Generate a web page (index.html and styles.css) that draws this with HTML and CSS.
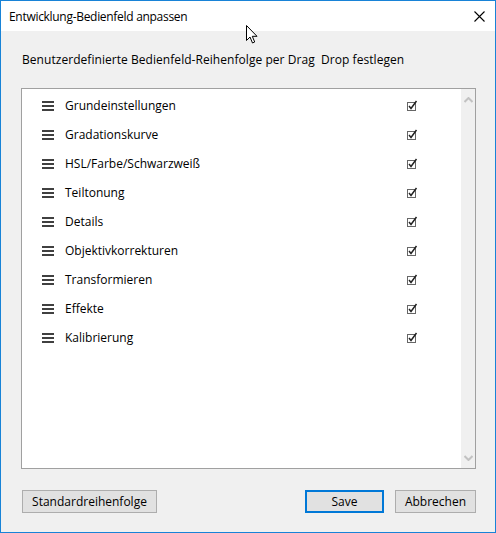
FILE: index.html
```html
<!DOCTYPE html>
<html lang="de">
<head>
<meta charset="utf-8">
<title>Entwicklung-Bedienfeld anpassen</title>
<link rel="stylesheet" href="styles.css">
</head>
<body>
<div class="window">
  <div class="titlebar">
    <span class="title">Entwicklung-Bedienfeld anpassen</span>
    <svg class="close" width="11" height="11" viewBox="0 0 11 11"><path d="M0.5 0.5 L10.5 10.5 M10.5 0.5 L0.5 10.5" stroke="#000" stroke-width="1.1" fill="none"/></svg>
  </div>
  <div class="content">
    <p class="subtitle">Benutzerdefinierte Bedienfeld-Reihenfolge per Drag&nbsp; Drop festlegen</p>
    <div class="listbox">
      <ul class="items">
        <li class="item"><span class="grip"></span><span class="label">Grundeinstellungen</span><svg class="check" width="11" height="12" viewBox="0 0 11 12"><rect x="0.5" y="2.5" width="8" height="8" fill="#fff" stroke="#666"/><path d="M2 6 L4 8.5 L9.5 1" stroke="#222" stroke-width="1.5" fill="none"/></svg></li>
        <li class="item"><span class="grip"></span><span class="label">Gradationskurve</span><svg class="check" width="11" height="12" viewBox="0 0 11 12"><rect x="0.5" y="2.5" width="8" height="8" fill="#fff" stroke="#666"/><path d="M2 6 L4 8.5 L9.5 1" stroke="#222" stroke-width="1.5" fill="none"/></svg></li>
        <li class="item"><span class="grip"></span><span class="label">HSL/Farbe/Schwarzweiß</span><svg class="check" width="11" height="12" viewBox="0 0 11 12"><rect x="0.5" y="2.5" width="8" height="8" fill="#fff" stroke="#666"/><path d="M2 6 L4 8.5 L9.5 1" stroke="#222" stroke-width="1.5" fill="none"/></svg></li>
        <li class="item"><span class="grip"></span><span class="label">Teiltonung</span><svg class="check" width="11" height="12" viewBox="0 0 11 12"><rect x="0.5" y="2.5" width="8" height="8" fill="#fff" stroke="#666"/><path d="M2 6 L4 8.5 L9.5 1" stroke="#222" stroke-width="1.5" fill="none"/></svg></li>
        <li class="item"><span class="grip"></span><span class="label">Details</span><svg class="check" width="11" height="12" viewBox="0 0 11 12"><rect x="0.5" y="2.5" width="8" height="8" fill="#fff" stroke="#666"/><path d="M2 6 L4 8.5 L9.5 1" stroke="#222" stroke-width="1.5" fill="none"/></svg></li>
        <li class="item"><span class="grip"></span><span class="label">Objektivkorrekturen</span><svg class="check" width="11" height="12" viewBox="0 0 11 12"><rect x="0.5" y="2.5" width="8" height="8" fill="#fff" stroke="#666"/><path d="M2 6 L4 8.5 L9.5 1" stroke="#222" stroke-width="1.5" fill="none"/></svg></li>
        <li class="item"><span class="grip"></span><span class="label">Transformieren</span><svg class="check" width="11" height="12" viewBox="0 0 11 12"><rect x="0.5" y="2.5" width="8" height="8" fill="#fff" stroke="#666"/><path d="M2 6 L4 8.5 L9.5 1" stroke="#222" stroke-width="1.5" fill="none"/></svg></li>
        <li class="item"><span class="grip"></span><span class="label">Effekte</span><svg class="check" width="11" height="12" viewBox="0 0 11 12"><rect x="0.5" y="2.5" width="8" height="8" fill="#fff" stroke="#666"/><path d="M2 6 L4 8.5 L9.5 1" stroke="#222" stroke-width="1.5" fill="none"/></svg></li>
        <li class="item"><span class="grip"></span><span class="label">Kalibrierung</span><svg class="check" width="11" height="12" viewBox="0 0 11 12"><rect x="0.5" y="2.5" width="8" height="8" fill="#fff" stroke="#666"/><path d="M2 6 L4 8.5 L9.5 1" stroke="#222" stroke-width="1.5" fill="none"/></svg></li>
      </ul>
      <div class="scrollbar">
        <svg width="9" height="6" viewBox="0 0 9 6"><path d="M0.5 5 L4.5 1 L8.5 5" stroke="#c2c2c2" stroke-width="2" fill="none"/></svg>
        <svg width="9" height="6" viewBox="0 0 9 6"><path d="M0.5 1 L4.5 5 L8.5 1" stroke="#c2c2c2" stroke-width="2" fill="none"/></svg>
      </div>
    </div>
    <div class="buttons">
      <button class="btn btn-default-order">Standardreihenfolge</button>
      <div class="spacer"></div>
      <button class="btn btn-save">Save</button>
      <button class="btn btn-cancel">Abbrechen</button>
    </div>
  </div>
  <svg class="cursor" width="13" height="20" viewBox="0 0 13 20"><path d="M0.5 0.5 L0.5 15.5 L4 12 L6.5 18 L8.7 17 L6.3 11.3 L11 11.3 Z" fill="#fff" stroke="#000" stroke-width="1"/></svg>
</div>
</body>
</html>
```
FILE: styles.css
```css
* { box-sizing: border-box; }
html, body { margin: 0; padding: 0; }
body {
  font-family: "Open Sans", "Noto Sans", sans-serif;
  font-size: 12px;
  color: #000;
  background: #fff;
}
.window {
  position: relative;
  width: 496px;
  height: 533px;
  border: 1px solid #1883d7;
  display: flex;
  flex-direction: column;
  background: #f0f0f0;
}
.titlebar {
  height: 30px;
  background: #fff;
  display: flex;
  align-items: center;
  padding: 0 10px 0 8px;
}
.title {
  flex: 1;
  color: #000;
  margin-top: 1px;
  letter-spacing: -0.3px;
}
.close { display: block; }
.content {
  flex: 1;
  display: flex;
  flex-direction: column;
  padding: 0 19px 19px 20px;
}
.subtitle {
  margin: 22px 0 0 1px;
  line-height: 14px;
  height: 14px;
  letter-spacing: 0.05px;
}
.listbox {
  margin-top: 21px;
  height: 381px;
  width: 455px;
  border: 1px solid #a0a0a0;
  background: #fff;
  display: flex;
}
.items {
  list-style: none;
  margin: 0;
  padding: 2px 0 0 0;
  flex: 1;
}
.item {
  height: 29px;
  display: flex;
  align-items: center;
}
.grip {
  width: 12px;
  height: 10px;
  margin-left: 20px;
  background:
    linear-gradient(#404040, #404040) 0 0 / 12px 2px no-repeat,
    linear-gradient(#404040, #404040) 0 4px / 12px 2px no-repeat,
    linear-gradient(#404040, #404040) 0 8px / 12px 2px no-repeat;
}
.label {
  margin-left: 11px;
  flex: 1;
}
.check {
  display: block;
  margin-right: 43px;
  margin-top: 0;
}
.scrollbar {
  width: 14px;
  background: #f0f0f0;
  display: flex;
  flex-direction: column;
  justify-content: space-between;
  align-items: center;
  padding: 8px 0 7px 0;
}
.scrollbar svg { display: block; }
.buttons {
  margin-top: 21px;
  display: flex;
  align-items: center;
}
.spacer { flex: 1; }
.btn {
  font-family: "Open Sans", "Noto Sans", sans-serif;
  font-size: 12px;
  color: #000;
  height: 23px;
  background: #e1e1e1;
  border: 1px solid #adadad;
  padding: 0;
  margin: 0;
}
.btn-default-order { width: 135px; margin-left: 1px; }
.btn-save { width: 79px; border: 2px solid #0078d7; }
.btn-cancel { width: 81px; margin-left: 11px; margin-right: 0; }
.cursor {
  position: absolute;
  left: 245px;
  top: 24px;
}
```
